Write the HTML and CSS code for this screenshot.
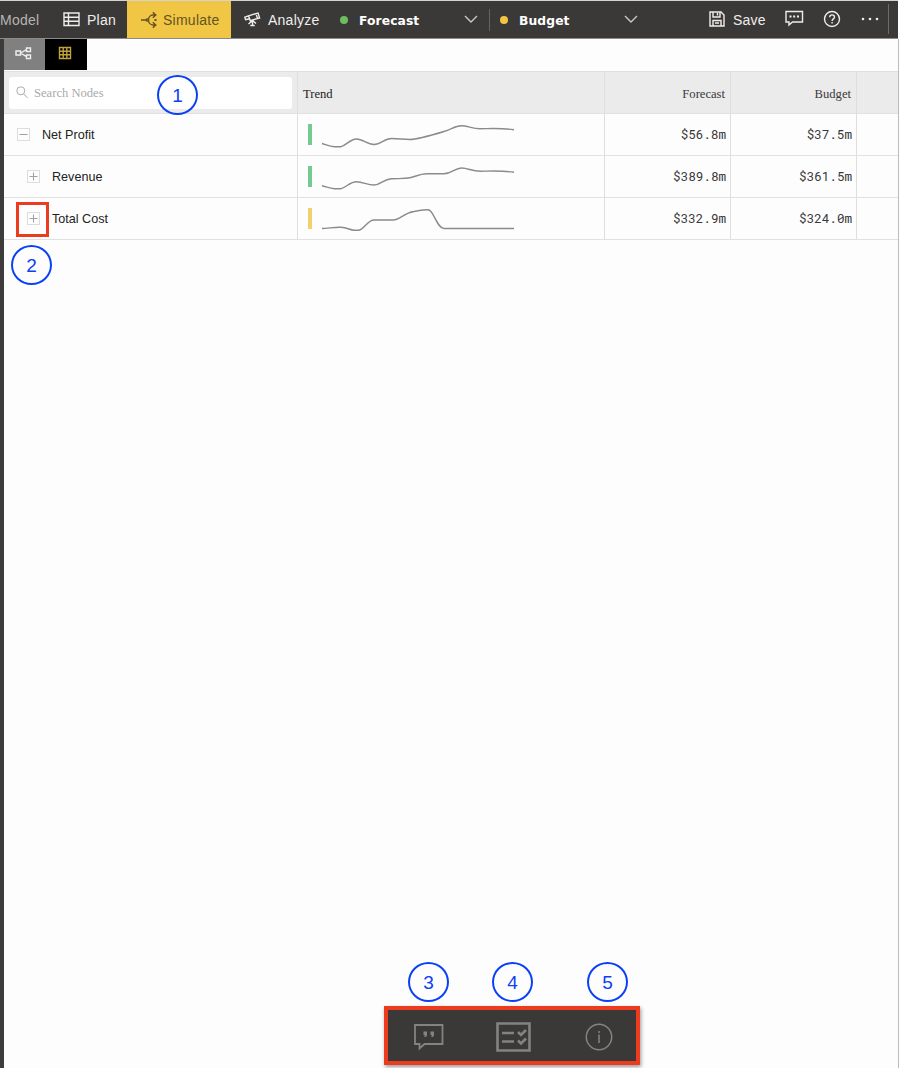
FILE: index.html
```html
<!DOCTYPE html>
<html lang="en">
<head>
<meta charset="utf-8">
<title>Simulate</title>
<link rel="stylesheet" href="styles.css">
</head>
<body>
<div class="app">
  <header class="topbar">
    <nav class="nav">
      <a class="nav-model">Model</a>
      <a class="nav-plan">
        <svg width="17" height="15" viewBox="0 0 17 15"><path d="M1 1h15v12.500H1zM5.500 1v12.500M1 5.200h15M1 9.300h15"/></svg>Plan</a>
      <a class="nav-simulate">
        <svg width="18" height="18" viewBox="0 0 18 18"><path d="M0 9h5.500M14.500 4H12C9 4 7.500 6.500 7.500 9S9 14 12 14H14.500M11.800 1.200L14.800 4 11.800 6.800M11.800 11.200L14.800 14 11.800 16.800"/><path class="fill" d="M13.500 8h2v2h-2z"/><circle cx="6.200" cy="9" r="1.100"/></svg>Simulate</a>
      <a class="nav-analyze">
        <svg width="18" height="17" viewBox="0 0 18 17"><path d="M4.500 4.800L14 2l1.600 5-9.400 2.600zM4.500 4.800L.8 6.200l.8 2.400 4-.9M12 2.700l1.500 4.700M8.500 9v6M8.500 9.500l-4 3.500M8.500 9.500l3.500 3M6.300 14.500h4.400"/></svg>Analyze</a>
    </nav>
    <div class="scenario first"><i class="dot green"></i><b>Forecast</b><svg class="chevron" width="14" height="9" viewBox="0 0 14 9"><path d="M1 1l6 6 6-6"/></svg></div>
    <div class="scenario second"><i class="dot amber"></i><b>Budget</b><svg class="chevron" width="14" height="9" viewBox="0 0 14 9"><path d="M1 1l6 6 6-6"/></svg></div>
    <div class="actions">
      <svg class="save-icon" width="16" height="16" viewBox="0 0 16 16"><path d="M1 1h11l3 3v11H1zM4 1v5h7V1M8.500 2v2.500M4 15V9.500h8V15M6 12h4"/></svg>
      <span class="save">Save</span>
      <svg class="chat-icon" width="19" height="17" viewBox="0 0 19 17"><path d="M1 1.500h16.500v10.500H7.500L4 15v-3H1z"/><path class="fill" d="M4.500 5.500h2v2h-2zM8.200 5.500h2v2h-2zM12 5.500h2v2h-2z"/></svg>
      <svg class="help-icon" width="18" height="18" viewBox="0 0 18 18"><circle cx="9" cy="9" r="7.500"/><path d="M6.700 7.300c0-3.300 4.800-3.100 4.800-.3 0 1.900-2.400 1.900-2.400 4M9.100 12v1.500"/></svg>
      <svg class="more-icon" width="18" height="4" viewBox="0 0 18 4"><g class="fill"><circle cx="2" cy="2" r="1.300"/><circle cx="9" cy="2" r="1.300"/><circle cx="16" cy="2" r="1.300"/></g></svg>
    </div>
  </header>

  <main class="panel">
    <div class="views">
      <button class="view tree"><svg width="17" height="14" viewBox="0 0 17 14"><path d="M1 5h4.500v4H1zM11.500 2h4v3.500h-4zM11.500 9h4v3.500h-4zM5.500 7L11.500 3.700M5.500 7l6 3.700"/></svg></button>
      <button class="view grid"><svg width="14" height="14" viewBox="0 0 14 14"><path d="M1.500 1.500h11v11h-11zM5.200 1.500v11M8.800 1.500v11M1.500 5.200h11M1.500 8.800h11"/></svg></button>
    </div>
    <section class="table">
      <div class="row head">
        <div class="cell search-cell"><div class="search"><svg width="12" height="13" viewBox="0 0 12 13"><circle cx="4.800" cy="4.800" r="4"/><path d="M7.700 7.900l3.800 4"/></svg><span>Search Nodes</span></div></div>
        <div class="cell">Trend</div>
        <div class="cell num">Forecast</div>
        <div class="cell num">Budget</div>
        <div class="cell"></div>
      </div>
      <div class="row">
        <div class="cell name"><svg class="toggle" width="13" height="13" viewBox="0 0 13 13"><rect x=".5" y=".5" width="12" height="12"/><path d="M2.500 6.500h8"/></svg>Net Profit</div>
        <div class="cell trend"><i class="bar"></i><svg width="196" height="26" viewBox="0 0 196 26"><path d="M1 20.500C6 22 9 23.300 13.500 23.700H20C26 22 29 16 35.500 16S46 21.500 53 21.500 63 15.500 70.500 15.500 82 16.500 89 16.500 108 13 123 8.500C131 6 134 2.800 140.500 2.800S151 5.800 159 5.800C172 5.500 180 4.800 193 6.800"/></svg></div>
        <div class="cell num">$56.8m</div><div class="cell num">$37.5m</div><div class="cell"></div>
      </div>
      <div class="row">
        <div class="cell name child"><svg class="toggle" width="13" height="13" viewBox="0 0 13 13"><rect x=".5" y=".5" width="12" height="12"/><path d="M2.500 6.500h8M6.500 2.500v8"/></svg>Revenue</div>
        <div class="cell trend"><i class="bar"></i><svg width="196" height="26" viewBox="0 0 196 26"><path d="M1 20.700C6 22 9 23.300 13.500 23.700H20C26 22 29 16.700 35.500 16.700S46 20 53 20 62 14 70.500 13.700 83 14 89 12.800 98 9 105.500 8.800H123C131 8.500 134 3 140.500 3S151 6.300 159 6.300C172 6 180 5.300 193 7.300"/></svg></div>
        <div class="cell num">$389.8m</div><div class="cell num">$361.5m</div><div class="cell"></div>
      </div>
      <div class="row">
        <div class="cell name child"><svg class="toggle" width="13" height="13" viewBox="0 0 13 13"><rect x=".5" y=".5" width="12" height="12"/><path d="M2.500 6.500h8M6.500 2.500v8"/></svg>Total Cost</div>
        <div class="cell trend"><i class="bar yellow"></i><svg width="196" height="26" viewBox="0 0 196 26"><path d="M1 21.500C8 21.200 14 20 20 20.300 26 20.500 29 23 33 23.200H38C43 22 47 13 53 13H72C80 13 82 6 93 4.500 98 3.300 103 2.500 107.500 2.800 113 4 116 21.500 123 21.500H193"/></svg></div>
        <div class="cell num">$332.9m</div><div class="cell num">$324.0m</div><div class="cell"></div>
      </div>
    </section>
  </main>

  <footer class="dock">
    <svg class="comment-icon" width="30" height="28" viewBox="0 0 30 28"><path d="M1 2h27.500v19H10.500l-5 4.500V21H1z"/><path class="fill" d="M9.500 8.500h3.500v4L11.800 14h-1.600L10.800 12H9.500zM16.500 8.500h3.500v4L18.800 14h-1.600L17.800 12h-1.300z"/></svg>
    <svg class="tasks-icon" width="35" height="30" viewBox="0 0 35 30"><path d="M1.500 1.500h32v27h-32zM6 11h12M6 19.500h12M22 10l3 3 5-5M22 18.500l3 3 5-5"/></svg>
    <svg class="info-icon" width="28" height="28" viewBox="0 0 28 28"><circle cx="14" cy="14" r="12.700"/><path d="M14 11.500V20M14 8v2"/></svg>
  </footer>

  <span class="focus-box"></span>
  <span class="marker m1">1</span><span class="marker m2">2</span><span class="marker m3">3</span><span class="marker m4">4</span><span class="marker m5">5</span>
</div>
</body>
</html>
```
FILE: styles.css
```css
* { box-sizing: border-box; }
body { margin: 0; background: #fdfdfd; font-family: "Liberation Sans", Arial, sans-serif; }
svg { fill: none; stroke: currentColor; stroke-width: 1.4; flex: none; display: block; }
svg .fill { fill: currentColor; stroke: none; }
.app { position: relative; width: 900px; height: 1068px; display: flex; flex-direction: column; overflow: hidden; }
.topbar { height: 39px; width: 898px; background: #3b3938; border-top: 1px solid #d5d5d0; border-bottom: 1px solid #8c8b8a; display: flex; color: #eeedec; font-size: 14px; letter-spacing: .25px; }
.nav { display: flex; width: 331px; }
.nav a { display: flex; align-items: center; }
.nav-model { width: 63px; color: #b5b4b2; }
.nav-plan { width: 64px; gap: 7px; }
.nav-simulate { width: 104px; background: #f1c644; color: #655322; padding-left: 14px; gap: 4px; }
.nav-analyze { padding-left: 13px; gap: 6px; }
.scenario { display: flex; align-items: center; font: bold 12.3px "DejaVu Sans", sans-serif; letter-spacing: .1px; color: #fff; }
.scenario.first { width: 159px; padding: 0 12px 0 9px; }
.scenario.second { width: 160px; padding: 0 12px 0 10px; position: relative; }
.scenario.second::before { content: ""; position: absolute; left: -1px; top: 8px; width: 1px; height: 22px; background: #666463; }
.scenario b { padding-top: 2px; }
.dot { width: 8px; height: 8px; border-radius: 50%; margin-right: 11px; }
.green { background: #6dbd5d; }
.amber { background: #f1c644; }
.chevron { margin-left: auto; color: #c9c8c7; }
.actions { display: flex; align-items: center; flex: 1; margin: 3px 9px 4px 0; border-right: 1px solid #6d6b6a; padding-left: 59px; }
.save { margin-left: 8px; width: 44px; padding-top: 1px; }
.save-icon { margin-bottom: 1px; }
.chat-icon { margin-left: 8px; margin-bottom: 1px; }
.help-icon { margin-left: 19px; margin-bottom: 1px; }
.more-icon { margin-left: 20px; margin-bottom: 1px; }
.panel { width: 899px; flex: 1; border-left: 4px solid #3e3c3b; border-right: 1px solid #bcbcbc; }
.views { display: flex; height: 32px; }
.view { border: 0; padding: 0 0 4px; height: 31px; display: flex; align-items: center; justify-content: center; }
.tree { width: 41px; background: #808080; color: #eee; padding-right: 3px; }
.grid { width: 42px; background: #000; color: #bfa33d; padding-right: 2px; }
.row { display: grid; grid-template-columns: 294px 307px 126px 126px 1fr; height: 42px; border-bottom: 1px solid #e1e1e1; font-size: 12.6px; color: #222; }
.cell { display: flex; align-items: center; border-right: 1px solid #dedede; }
.cell:last-child { border-right: 0; }
.head { height: 43px; background: #ebebeb; border-top: 1px solid #e0e0e0; font: 12.6px "Liberation Serif", serif; }
.head .cell { padding-left: 5px; padding-top: 3px; }
.search { width: 283px; height: 32px; background: #fff; border-radius: 3px; display: flex; align-items: center; color: #aaa; gap: 6px; padding-left: 7px; font-size: 12.6px; }
.search span { padding-top: 1px; }
.head .search-cell { padding: 0 0 0 5px; }
.search svg { stroke-width: 1; }
.num { justify-content: flex-end; padding-right: 4px; color: #383838; }
.row:not(.head) .num { font: 12.6px "Roboto Mono", "DejaVu Sans Mono", monospace; padding-bottom: 1px; }
.head .num { padding-right: 5px; }
.name { padding-left: 13px; gap: 12px; }
.name.child { padding-left: 23px; }
.toggle { color: #a0a0a0; stroke-width: 1; }
.toggle rect { stroke: #ddd; }
.trend { padding-left: 10px; gap: 9px; color: #8b8b8b; }
.trend svg { margin-top: 3px; }
.bar { width: 4px; height: 21px; background: #75ca91; }
.yellow { background: #f0d16d; }
.dock { position: absolute; left: 384px; top: 1006px; width: 256px; height: 59px; border: 4px solid #ed3b20; background: #3b3938; box-shadow: 1px 2px 4px #0006; color: #858381; display: flex; align-items: center; padding: 3px 0 0 26px; }
.comment-icon { stroke-width: 1.8; }
.tasks-icon { margin-left: 52px; stroke-width: 2.6; }
.info-icon { margin-left: 54px; margin-bottom: 1px; stroke-width: 1.5; }
.focus-box { position: absolute; left: 16px; top: 202px; width: 33px; height: 35px; border: 3px solid #ed3b20; }
.marker { position: absolute; width: 41px; height: 40px; border: 2px solid #0b41f5; border-radius: 50%; color: #0b41f5; font-size: 19px; display: flex; align-items: center; justify-content: center; padding-top: 1px; }
.m1 { left: 157px; top: 75px; }
.m2 { left: 11px; top: 245px; }
.m3 { left: 408px; top: 962px; }
.m4 { left: 492px; top: 962px; }
.m5 { left: 587px; top: 962px; }
```
